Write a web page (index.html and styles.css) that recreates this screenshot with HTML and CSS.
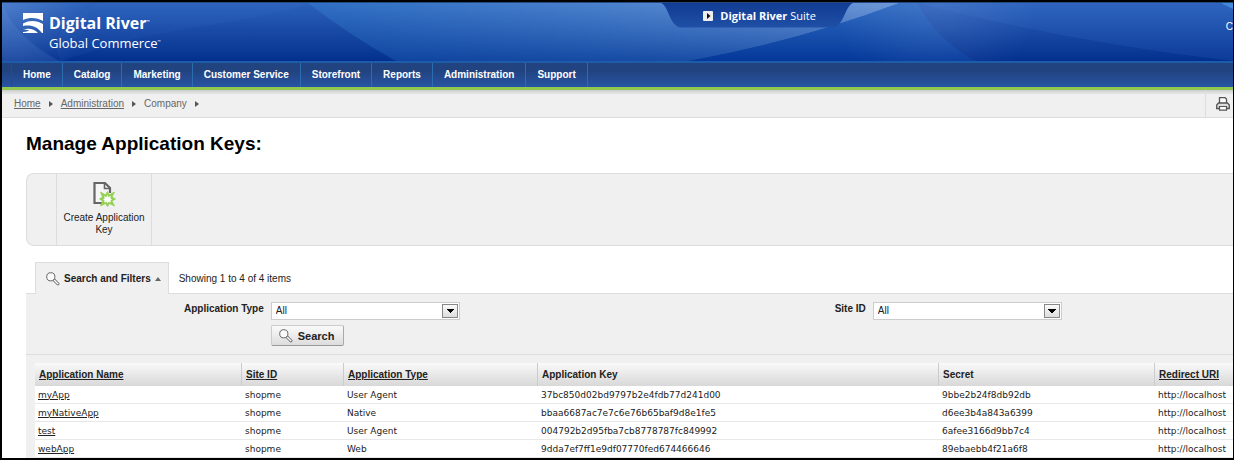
FILE: index.html
```html
<!DOCTYPE html>
<html lang="en">
<head>
<meta charset="utf-8">
<title>Manage Application Keys</title>
<link rel="stylesheet" href="styles.css">
</head>
<body>
<div class="frame">
  <header class="banner">
    <svg class="banner-art" viewBox="0 0 1232 59" preserveAspectRatio="none" aria-hidden="true">
      <defs>
        <linearGradient id="base" x1="0" y1="0" x2="0" y2="1"><stop offset="0" stop-color="#2c62bb"/><stop offset="1" stop-color="#03308e"/></linearGradient>
        <linearGradient id="mid" x1="0" y1="0" x2="0" y2="1"><stop offset="0" stop-color="#3170c4"/><stop offset="1" stop-color="#0d439f"/></linearGradient>
        <linearGradient id="glowx" x1="0" y1="0" x2="1" y2="0"><stop offset="0" stop-color="#8fb0e4" stop-opacity="0"/><stop offset="1" stop-color="#a5bce8" stop-opacity=".5"/></linearGradient>
        <linearGradient id="right" x1="0" y1="0" x2="0" y2="1"><stop offset="0" stop-color="#2f6cc2"/><stop offset="1" stop-color="#04389a"/></linearGradient>
        <radialGradient id="corner" gradientUnits="userSpaceOnUse" cx="0" cy="0" r="90"><stop offset="0" stop-color="#88aee8" stop-opacity=".35"/><stop offset="1" stop-color="#88aee8" stop-opacity="0"/></radialGradient>
        <radialGradient id="spot" gradientUnits="userSpaceOnUse" cx="935" cy="0" r="100"><stop offset="0" stop-color="#88a6e0" stop-opacity=".2"/><stop offset="1" stop-color="#88a6e0" stop-opacity="0"/></radialGradient>
        <linearGradient id="fade" x1="0" y1="0" x2="0" y2="1"><stop offset="0" stop-color="#fff" stop-opacity="1"/><stop offset="1" stop-color="#fff" stop-opacity=".25"/></linearGradient>
        <mask id="down"><rect width="1232" height="59" fill="url(#fade)"/></mask>
      </defs>
      <rect width="1232" height="59" fill="url(#base)"/>
      <path d="M0 0C10 26 32 46 58 59H0z" fill="#6fa0e0" opacity=".14"/>
      <path d="M58 59C48 38 58 20 96 0H310C250 20 180 24 120 40z" fill="#5288dc" opacity=".07"/>
      <rect width="100" height="59" fill="url(#corner)"/>
      <path d="M306 0Q350 34 394 59H688Q800 38 898 0z" fill="url(#mid)"/>
      <g mask="url(#down)"><path d="M306 0Q350 34 394 59H688Q800 38 898 0z" fill="url(#glowx)"/></g>
      <path d="M688 59Q800 38 898 0H916Q936 38 974 59z" fill="url(#right)"/>
      <path d="M916 0H1232V59Q1070 40 916 0z" fill="#4a82dc" opacity=".14"/>
      <rect x="830" width="220" height="59" fill="url(#spot)"/>
      <path d="M1220 0L1232 6V0z" fill="#438ad8"/>
    </svg>
    <div class="brand">
      <svg class="brand-mark" viewBox="0 0 20 20" aria-hidden="true">
        <path d="M0 0H20V8C14 4.500 7 4 0 7z" fill="#fff"/>
        <path d="M0 10.500C7 6.500 14 7.500 20 11V20H19C14 13.500 8 11.500 0 13z" fill="#fff"/>
        <path d="M0 16.500C6 15 11 16 15 20H0V19C4 18.500 5 18 6 17.500C4 16.500 2 16.500 0 16.500z" fill="#fff"/>
      </svg>
      <div class="brand-text">
        <span class="brand-name">Digital River<small>™</small></span>
        <span class="brand-product">Global Commerce<small>™</small></span>
      </div>
    </div>
    <a class="suite" href="#">
      <svg class="suite-shape" viewBox="0 0 192 25" preserveAspectRatio="none" aria-hidden="true">
        <defs><linearGradient id="suite" x1="0" y1="0" x2="0" y2="1"><stop offset="0" stop-color="#123c94"/><stop offset="1" stop-color="#1f4fa6"/></linearGradient></defs>
        <path d="M0 0C8 3 8 22 19 24.500H173C183 22 184 3 192 0z" fill="url(#suite)"/>
      </svg>
      <svg class="suite-play" viewBox="0 0 10 10" aria-hidden="true"><rect width="10" height="10" rx="1" fill="#eee"/><path d="M4 2L7.500 5L4 8z" fill="#111"/></svg>
      <span><b>Digital River</b> Suite</span>
    </a>
    <span class="account">C</span>
  </header>

  <nav class="menu">
    <a href="#">Home</a><a href="#">Catalog</a><a href="#">Marketing</a><a href="#">Customer Service</a><a href="#">Storefront</a><a href="#">Reports</a><a href="#">Administration</a><a href="#">Support</a>
  </nav>

  <div class="trail">
    <a href="#">Home</a><i class="caret"></i><a href="#">Administration</a><i class="caret"></i><span>Company</span><i class="caret"></i>
    <button class="print" type="button" aria-label="Print">
      <svg viewBox="0 0 14 14" aria-hidden="true" fill="none" stroke="#555">
        <path d="M3.500 6V.7H9L10.500 2V6" fill="#fff" stroke-width="1.300"/>
        <path d="M2.500 6H11.500L13.300 8V11.500H.7V8z" fill="#ddd" stroke-width="1.300"/>
        <path d="M3.500 9.500H10.500V13.200H3.500z" fill="#fff" stroke-width="1.200"/>
      </svg>
    </button>
  </div>

  <main class="content">
    <h1>Manage Application Keys:</h1>

    <div class="toolbar">
      <button class="tool" type="button">
        <svg viewBox="0 0 24 26" aria-hidden="true">
          <path d="M10 22H2.500V2H13L18 7V12" fill="#f6f6f6" stroke="#666" stroke-width="2.200"/>
          <path d="M12.500 2V7.500H18" fill="none" stroke="#666" stroke-width="1.600"/>
          <path d="M15.500 10.500L17 14L22.500 11L20 16L23.500 18L20 20L22.500 25L17.500 22.500L15.500 25.500L13.500 22.500L8.500 25L10.500 20L7.500 18L10.500 16L8.500 11L13.500 14z" fill="#92d050" stroke="#92d050" stroke-width=".8"/>
          <path d="M15.500 14.500L16.500 16.500L18.500 15.500L18 17.500L19.500 18.500L18 19.500L18.500 21L16.500 20.500L15.500 22L14.500 20.500L12.500 21L13 19.500L11.500 18.500L13 17.500L12.500 15.500L14.500 16.500z" fill="#fff" stroke="#fff" stroke-width=".6"/>
        </svg>
        <span>Create Application Key</span>
      </button>
    </div>

    <div class="filter-head">
      <button class="filter-tab" type="button">
        <svg class="lens" viewBox="0 0 14 14" aria-hidden="true"><circle cx="4.800" cy="4.800" r="4.100" fill="#fafafa" stroke="#666"/><path d="M7 8.500L8.700 7L13 11.500Q13 13.300 11.500 13z" fill="#fff" stroke="#555"/></svg>
        <span>Search and Filters</span><i class="up"></i>
      </button>
      <span class="count">Showing 1 to 4 of 4 items</span>
    </div>

    <form class="filters">
      <div class="field">
        <label for="type">Application Type</label>
        <div class="controls">
          <select id="type"><option>All</option></select>
          <button class="search" type="button">
            <svg class="lens" viewBox="0 0 14 14" aria-hidden="true"><circle cx="4.800" cy="4.800" r="4.100" fill="#fafafa" stroke="#666"/><path d="M7 8.500L8.700 7L13 11.500Q13 13.300 11.500 13z" fill="#fff" stroke="#555"/></svg>
            Search
          </button>
        </div>
      </div>
      <div class="field">
        <label for="site">Site ID</label>
        <div class="controls"><select id="site"><option>All</option></select></div>
      </div>
    </form>

    <div class="results">
      <table>
        <colgroup><col class="c-name"><col class="c-site"><col class="c-type"><col class="c-key"><col class="c-secret"><col></colgroup>
        <thead><tr><th><a href="#">Application Name</a></th><th><a href="#">Site ID</a></th><th><a href="#">Application Type</a></th><th>Application Key</th><th>Secret</th><th><a href="#">Redirect URI</a></th></tr></thead>
        <tbody>
          <tr><td><a href="#">myApp</a></td><td>shopme</td><td>User Agent</td><td>37bc850d02bd9797b2e4fdb77d241d00</td><td>9bbe2b24f8db92db</td><td>http://localhost</td></tr>
          <tr><td><a href="#">myNativeApp</a></td><td>shopme</td><td>Native</td><td>bbaa6687ac7e7c6e76b65baf9d8e1fe5</td><td>d6ee3b4a843a6399</td><td>http://localhost</td></tr>
          <tr><td><a href="#">test</a></td><td>shopme</td><td>User Agent</td><td>004792b2d95fba7cb8778787fc849992</td><td>6afee3166d9bb7c4</td><td>http://localhost</td></tr>
          <tr><td><a href="#">webApp</a></td><td>shopme</td><td>Web</td><td>9dda7ef7ff1e9df07770fed674466646</td><td>89ebaebb4f21a6f8</td><td>http://localhost</td></tr>
        </tbody>
      </table>
    </div>
  </main>
</div>
</body>
</html>
```
FILE: styles.css
```css
* { box-sizing: border-box; }
body { margin: 0; background: #fff; color: #222; font: 10px/12px "Liberation Sans", Arial, sans-serif; }
button { margin: 0; font: inherit; color: inherit; cursor: pointer; }
.frame { min-height: 100vh; border: 2px solid #000; border-right-width: 1px; overflow: hidden; }

.banner { position: relative; display: flex; justify-content: space-between; height: 59px; border-top: 1px solid #23497f; color: #fff; }
.banner-art { position: absolute; inset: 0; width: 100%; height: 100%; }
.brand { position: relative; display: flex; gap: 6px; padding: 10px 0 0 21px; }
.brand-mark { width: 20px; height: 20px; }
.brand-text { display: flex; flex-direction: column; font-family: "Open Sans", "Noto Sans", sans-serif; white-space: nowrap; }
.brand-name { font-size: 16px; line-height: 20px; font-weight: 700; }
.brand-product { font-size: 13px; line-height: 20px; }
.brand-text small { font-size: 4px; line-height: 4px; vertical-align: super; }
.suite { position: absolute; top: 0; left: 53.5%; width: 192px; height: 25px; padding-left: 6px; display: flex; align-items: center; justify-content: center; gap: 7px; color: #fff; font: 11px/22px "Open Sans", "Noto Sans", sans-serif; text-decoration: none; white-space: nowrap; }
.suite-shape { position: absolute; inset: 0; width: 100%; height: 100%; }
.suite-play { position: relative; width: 10px; height: 10px; }
.suite span { position: relative; }
.account { position: relative; padding-top: 18px; }

.menu { display: flex; height: 26px; padding-left: 9px; border-top: 2px solid #1e5ba8; background: linear-gradient(#21437f 30%, #2854a4); }
.menu a { padding: 0 11px; border-right: 1px solid #2c6db0; color: #fff; font-weight: 700; line-height: 24px; text-decoration: none; white-space: nowrap; }
.menu a:first-child { border-left: 1px solid #1f4d92; }

.trail { display: flex; align-items: center; height: 31px; padding-left: 12px; border-top: 3px solid #92c750; border-bottom: 1px solid #ddd; background: linear-gradient(#ccc, #f0f0f0 5px); color: #666; }
.trail a { color: #666; }
.caret { margin: 0 8px; border: solid transparent; border-width: 3px 0 3px 4px; border-left-color: #555; }
.print { align-self: stretch; display: flex; align-items: center; margin-left: auto; padding: 0 3px 0 10px; border: 0; border-left: 1px solid #ddd; background: none; }
.print svg { width: 14px; height: 14px; }

.content { padding: 15px 0 0 24px; }
h1 { margin: 0 0 18px; color: #000; font-size: 19px; line-height: 22px; }
.toolbar { display: flex; height: 73px; padding-left: 29px; border: 1px solid #ddd; border-right: 0; border-radius: 8px 0 0 8px; background: #f0f0f0; }
.tool { display: flex; flex-direction: column; align-items: center; gap: 5px; width: 96px; padding: 7px 6px; border: solid #ddd; border-width: 0 1px; background: none; }
.tool svg { width: 24px; height: 26px; }

.filter-head { display: flex; align-items: flex-end; gap: 10px; margin-top: 16px; padding-left: 9px; }
.filter-tab { display: flex; align-items: center; gap: 4px; height: 32px; padding: 0 7px 0 10px; border: 1px solid #ddd; border-bottom: 0; background: #f0f0f0; font-weight: 700; z-index: 1; }
.lens { width: 14px; height: 14px; }
.up { border: solid transparent; border-width: 0 3px 4px; border-bottom-color: #666; }
.count { line-height: 30px; }

.filters { display: grid; grid-template-columns: 1fr 1fr; margin-top: -1px; padding: 8px 0 8px 3px; border: solid #ddd; border-width: 1px 0; background: #f0f0f0; }
.field { display: flex; gap: 7px; }
.field label { width: 39%; padding-top: 1px; font-weight: 700; text-align: right; }
.controls { display: flex; flex-direction: column; align-items: flex-start; gap: 5px; }
select { appearance: none; width: 189px; height: 18px; padding: 0 4px; border: 1px solid #ccc; border-radius: 0; color: #222; font: inherit;
  background:
    conic-gradient(from -45deg at 50% 100%, #000 90deg, transparent 0) right 5px top 6px / 8px 4px no-repeat,
    linear-gradient(#fafafa, #ddd) right 2px top 2px / 14px 12px no-repeat,
    linear-gradient(#888, #888) right 1px top 1px / 16px 14px no-repeat,
    #fff; }
.search { display: flex; align-items: center; gap: 5px; height: 21px; padding: 0 9px 0 7px; border: 1px solid #ccc; border-bottom-color: #999; border-right-color: #aaa; border-radius: 2px; background: linear-gradient(#fafafa, #ddd); font-size: 11px; font-weight: 700; }

.results { padding: 8px 0 0 9px; background: #f0f0f0; }
table { width: 100%; border-collapse: separate; border-spacing: 0; table-layout: fixed; }
.c-name { width: 207px; }
.c-site { width: 102px; }
.c-type { width: 194px; }
.c-key { width: 401px; }
.c-secret { width: 216px; }
th { height: 23px; padding: 0 4px; border-right: 1px solid #ccc; background: linear-gradient(#fafafa, #ececec 40%, #d8d8d8); text-align: left; white-space: nowrap; }
th:last-child { border-right: 0; }
th a, td a { color: inherit; }
td { height: 18px; padding: 0 3px; border-bottom: 1px solid #e8e8e8; background: #fff; font: 9px/14px "DejaVu Sans", Verdana, sans-serif; white-space: nowrap; }
```
